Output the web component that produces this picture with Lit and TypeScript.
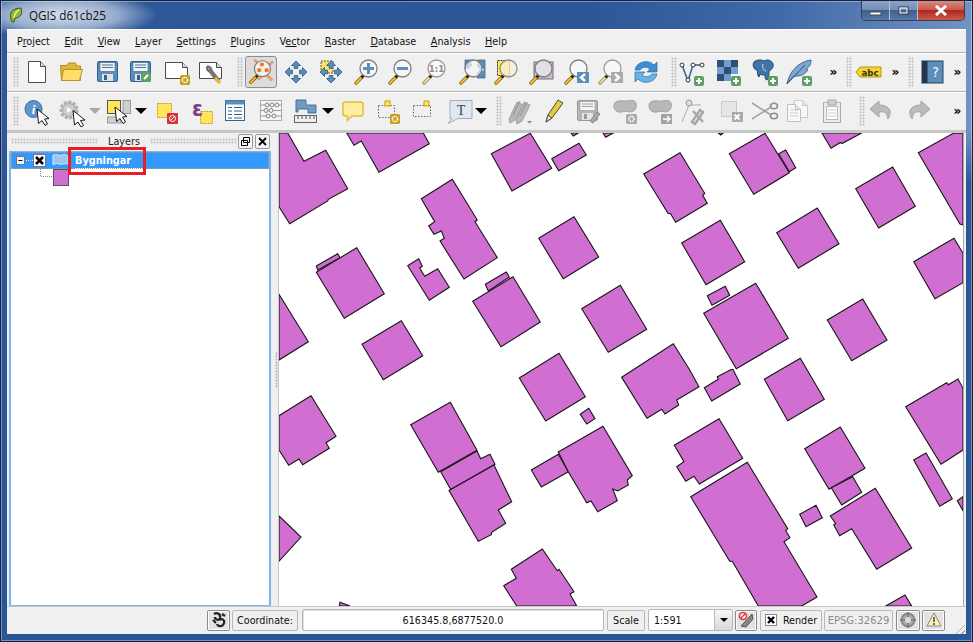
import { LitElement, html, css, svg } from 'lit';
import { customElement } from 'lit/decorators.js';

const BLUE = '#5b8dbd', DARK = '#34618c', YEL = '#ffe45c', YELD = '#c39f12', GRN = '#5f9f62';

// ---- small pieces the icons are built from
const plus = (x = 24, y = 24) => svg`<rect x=${x - 5} y=${y - 5} width="10" height="10" rx="2" fill=${GRN}/><path d="M${x - 3} ${y}h6M${x} ${y - 3}v6" stroke="#fff" stroke-width="2"/>`;
const gearBadge = (x = 24, y = 25) => svg`<rect x=${x - 5} y=${y - 5} width="10" height="10" rx="1.500" fill="#c9a018"/><circle cx=${x} cy=${y} r="2.600" fill="none" stroke="#fff" stroke-width="1.600" stroke-dasharray="1.400 .7"/>`;
const gearGray = (x = 24, y = 25) => svg`<rect x=${x - 5} y=${y - 5} width="11" height="10" rx="1.500" fill="#aaa"/><circle cx=${x + .5} cy=${y} r="2.600" fill="none" stroke="#fff" stroke-width="1.600" stroke-dasharray="1.400 .7"/>`;
const mag = (inner: unknown = '', glass = '#f6f6f6', ring = '#7d7d7d', handle = '#f0c030', hd = '#8a6a00') => svg`
  <path d="M5 27l6-6" stroke=${hd} stroke-width="3.600" stroke-linecap="round"/>
  <path d="M5 27l6-6" stroke=${handle} stroke-width="1.800" stroke-linecap="round"/>
  <path d="M10.500 21.500l2.500-2.500" stroke="#222" stroke-width="2.600"/>
  <circle cx="17.500" cy="12.500" r="8.500" fill=${glass} stroke=${ring} stroke-width="1.300"/>${inner}`;
const arrows4 = (c = BLUE, d = DARK) => svg`<g fill=${c} stroke=${d} stroke-width=".9" stroke-linejoin="round">
  <path d="M16 5l4.500 4.500h-2.700v3h-3.600v-3h-2.700z"/><path d="M16 27l4.500-4.500h-2.700v-3h-3.600v3h-2.700z"/>
  <path d="M5 16l4.500-4.500v2.700h3v3.600h-3v2.700z"/><path d="M27 16l-4.500-4.500v2.700h-3v3.600h3v2.700z"/></g>`;
const floppy = (c = BLUE, d = DARK, x = 6, y = 5) => svg`<g transform="translate(${x} ${y})">
  <rect x=".5" y=".5" width="20" height="20" rx="1.500" fill=${c} stroke=${d}/>
  <rect x="3" y="1.500" width="15" height="9" fill="#f4f4f4" stroke=${d} stroke-width=".6"/>
  <path d="M5 4h11M5 6.500h11" stroke=${d} stroke-width=".9"/>
  <rect x="5" y="13" width="11" height="7" fill="#e3e3e3"/><rect x="7" y="14" width="3" height="5" fill=${d}/></g>`;
const page = (x: number, y: number, w: number, h: number, c = '#4a4a4a') => svg`<path d="M${x} ${y}h${w - 5}l5 5v${h - 5}h${-w}z" fill="#fff" stroke=${c}/><path d="M${x + w - 5} ${y}v5h5" fill="#ddd" stroke=${c}/>`;
// white arrow pointer, tip at x,y
const cursor = (x = 0, y = 0) => svg`<path transform="translate(${x} ${y})" d="M0 0l12 9.500-4.500.5 3 5-2.500 1.500-3-5-3.500 3z" fill="#fff" stroke="#000" stroke-width=".9" stroke-linejoin="round"/>`;
const magGray = (inner: unknown = '') => mag(inner, '#f8f8f8', '#9a9a9a', '#e6d9a0', '#a08f55');
const blob = (x = 0) => svg`<path transform="translate(${x} 0)" d="M2 11c0-5 5-5.500 10-5 4 .6 6-1 9-.5 3 .8 4 4 3 7-1 4-5 5-8 4-4-1-5 1-9 .6-3-.6-5-3-5-6.100z" fill="#b8b8b8" stroke="#a0a0a0"/>`;

const icons: Record<string, unknown> = {
  newDoc: svg`${page(7.500, 5.500, 17, 21)}`,
  open: svg`<path d="M6.500 24.500l-1-15h6l2-2.500h7l1 3h4v14.500z" fill="#e0b838" stroke="#b08c1c"/><path d="M6.500 24.500l2-11h19l-3 11z" fill="#ffdd6a" stroke="#b8941e"/>`,
  save: floppy(),
  saveAs: svg`${floppy(BLUE, DARK, 4, 5)}<rect x="15" y="16" width="10" height="10" rx="2" fill=${GRN}/><path d="M18 23l4-4" stroke="#fff" stroke-width="2.200"/>`,
  composer: svg`${page(4.500, 6.500, 22, 16)}${gearBadge(24, 24)}`,
  manager: svg`${page(4.500, 6.500, 22, 16)}<path d="M12 10a4 4 0 0 0 2 6l8 10 3-2-8-10a4 4 0 0 0-5-4l3 3-1 2z" fill="#777" stroke="#444" stroke-width=".6"/><path d="M20 22l5 5" stroke="#e3b93a" stroke-width="3.400"/>`,
  touch: svg`<path d="M9 3l8 8M28 25l-9-9M29 5l-8 6M13 24l5-5" stroke="#e89a60" stroke-width="3"/>${mag('', '#f4efe8')}<circle cx="17" cy="8" r="2.200" fill="#e8772a"/><circle cx="14" cy="14" r="2.200" fill="#e8772a"/><circle cx="22" cy="14" r="2.200" fill="#e8772a"/>`,
  pan: arrows4(),
  panSel: svg`<rect x="6" y="5" width="12" height="12" fill=${YEL} stroke="#555" stroke-dasharray="2 1"/>${arrows4()}`,
  zoomIn: mag(svg`<path d="M12 12.500h11M17.500 7v11" stroke="#5a8fc2" stroke-width="3"/>`),
  zoomOut: mag(svg`<path d="M12 12.500h11" stroke="#5a8fc2" stroke-width="3"/>`),
  zoom11: magGray(svg`<text x="17.500" y="16" font-size="9.500" font-weight="700" text-anchor="middle" fill="#8a8a8a" font-family="DejaVu Sans">1:1</text>`),
  zoomFull: svg`<g fill=${BLUE} stroke=${DARK} stroke-width=".7"><path d="M9 4h8l-3 3 2 2-4 4-2-2-1 2z"/><path d="M29 4h-8l2 3-2 2 3 4 2-2 3 3z"/><path d="M29 22h-8l2-3-2-2 3-3 2 2 3-2z"/></g>${mag('', 'rgba(245,245,245,.7)')}`,
  zoomSel: svg`<rect x="6.500" y="4.500" width="12" height="15" fill=${YEL} stroke="#333" stroke-dasharray="2 1"/>${mag('', 'rgba(245,240,215,.75)', '#8d8d8d')}`,
  zoomLayer: svg`<rect x="8" y="6" width="19" height="17" fill="#cdbccb" stroke="#7d6c7b"/>${mag('', 'rgba(235,235,235,.75)')}`,
  zoomLast: svg`${mag()}<rect x="16" y="16" width="12" height="11" fill=${BLUE}/><path d="M24 18l-4 3.500 4 3.500" fill="none" stroke="#fff" stroke-width="2.400"/>`,
  zoomNext: svg`${magGray()}<rect x="16" y="16" width="12" height="11" fill="#aaa"/><path d="M20 18l4 3.500-4 3.500" fill="none" stroke="#fff" stroke-width="2.400"/>`,
  refresh: svg`<path d="M5 14a11 10 0 0 1 19-5l3-3v10h-10l3-3a6.500 6 0 0 0-10 1z" fill="#3f8fd0" stroke="#2a6fa8" stroke-width=".7"/><path d="M27 18a11 10 0 0 1-19 5l-3 3v-10h10l-3 3a6.500 6 0 0 0 10-1z" fill="#6cb0e4" stroke="#2a6fa8" stroke-width=".7"/>`,
  addVec: svg`<path d="M5 9l6 16 5-16 8 0" fill="none" stroke=${DARK} stroke-width="1.500"/><g fill="#fff" stroke="#333"><circle cx="5" cy="9" r="2"/><circle cx="11" cy="24" r="2"/><circle cx="16" cy="9" r="2"/><circle cx="25" cy="9" r="2"/></g>${plus(22, 25)}`,
  addRas: svg`<g fill="#2f4f74"><rect x="5" y="4" width="7" height="7"/><rect x="19" y="4" width="7" height="7"/><rect x="12" y="11" width="7" height="7"/><rect x="5" y="18" width="7" height="7"/></g><g fill="#6f9fce"><rect x="12" y="4" width="7" height="7"/><rect x="5" y="11" width="7" height="7"/><rect x="19" y="11" width="7" height="7"/><rect x="12" y="18" width="7" height="7"/></g>${plus(24, 25)}`,
  addPg: svg`<path d="M6 6c3-3 8-2 10-1 3-2 8-1 9 3 1 4-2 6-4 7 0 4 0 7-2 9-2 0-2-3-2-5-2 0-4 0-5-1l-1 3c-2-1-1-5-2-7-3 0-5-5-3-8z" fill="#3f74a8" stroke="#27496c"/><path d="M15 8c-1 3 0 6 3 7" fill="none" stroke="#cfe0ef"/>${plus(25, 25)}`,
  addSpl: svg`<path d="M4 28C6 17 14 6 28 4c0 6-3 8-5 9l2 1c-3 4-7 6-11 6-3 0-6 2-10 8z" fill="#7ea8d4" stroke="#3c6a98"/><path d="M4 28L22 9" stroke="#2b5078"/>${plus(24, 25)}`,
  abc: svg`<path d="M3 16l4-5h21v10H7z" fill="#f6d42a" stroke="#b8960a"/><text x="17" y="19.500" font-size="9.500" font-weight="700" text-anchor="middle" fill="#333" font-family="DejaVu Sans">abc</text>`,
  help: svg`<rect x="5" y="5" width="21" height="22" fill=${BLUE} stroke="#2a4057"/><rect x="5" y="5" width="5.500" height="22" fill="#24384d"/><text x="18.500" y="21" font-size="14" text-anchor="middle" fill="#fff" font-family="DejaVu Sans">?</text>`,
  identify: svg`<circle cx="13.500" cy="14" r="8.500" fill="#5f97cc" stroke="#3b6d9e"/><text x="13.500" y="19" font-size="13" font-weight="700" font-style="italic" text-anchor="middle" fill="#fff" font-family="Liberation Serif">i</text>${cursor(17, 14)}`,
  action: svg`<circle cx="15" cy="15" r="7.500" fill="#ddd" stroke="#b0b0b0" stroke-width="4" stroke-dasharray="3 1.300"/><circle cx="15" cy="15" r="6.500" fill="#ccc" stroke="#aaa"/><path d="M13 12l5 3-5 3z" fill="#fff"/>${cursor(19, 15.500)}`,
  select: svg`<rect x="5.500" y="5.500" width="13" height="13" fill=${YEL} stroke="#555"/><rect x="21" y="5.500" width="7.500" height="13" fill="#cfcfcf" stroke="#999"/><rect x="5.500" y="22" width="13.500" height="6" fill="#cfcfcf" stroke="#999"/>${cursor(13, 12)}`,
  deselect: svg`<rect x="9.500" y="8.500" width="14" height="14" fill=${YEL} stroke=${YELD} stroke-dasharray="2 1"/><rect x="19" y="18" width="11" height="11" rx="1" fill="#d8323a"/><circle cx="24.500" cy="23.500" r="3" fill="none" stroke="#fff"/><path d="M22.500 25.500l4-4" stroke="#fff"/>`,
  expr: svg`<rect x="16.500" y="16.500" width="12" height="12" fill=${YEL} stroke=${YELD} stroke-dasharray="2 1"/><text x="13.500" y="21" font-size="22" font-weight="700" text-anchor="middle" fill="#7a3f84" font-family="DejaVu Sans">ε</text>`,
  table: svg`<rect x="5.500" y="5.500" width="19" height="20" fill="#fff" stroke=${DARK}/><rect x="5.500" y="5.500" width="19" height="4" fill=${BLUE}/><path d="M8 12.500h4M14 12.500h8M8 16h4M14 16h8M8 19.500h4M14 19.500h8M8 23h4M14 23h8" stroke=${DARK} stroke-width="1.200"/>`,
  stats: svg`<rect x="5.500" y="5.500" width="21" height="20" fill="#f6f6f6" stroke="#aaa"/><path d="M6 10h20M6 15.500h20M6 21h20" stroke="#999"/><g fill="#eee" stroke="#888"><circle cx="12" cy="10" r="2"/><circle cx="17" cy="10" r="2"/><circle cx="22" cy="10" r="2"/><circle cx="11" cy="15.500" r="2"/><circle cx="16" cy="15.500" r="2"/><circle cx="13" cy="21" r="2"/><circle cx="19" cy="21" r="2"/></g>`,
  measure: svg`<path d="M6 5h10v5h10v8h-8v-4h-10v3h-2z" fill="#6f9cc4" stroke="#47729a"/><rect x="4.500" y="20.500" width="22" height="7" fill="#eee" stroke="#666"/><path d="M8 21v3M12 21v3M16 21v3M20 21v3M24 21v3" stroke="#555"/>`,
  tip: svg`<path d="M8.500 7h15q2.500 0 2.500 2.500v9q0 2.500-2.500 2.500H15l-4.500 4.500V21h-2Q6 21 6 18.500v-9Q6 7 8.500 7z" fill="#ffeda2" stroke="#e2bf33" stroke-width="1.500"/>`,
  annotNew: svg`<rect x="5.500" y="10.500" width="16" height="12" fill="none" stroke="#666" stroke-dasharray="1.500 1.500"/><rect x="12" y="6" width="5" height="5" fill=${YEL} stroke=${YELD}/>${gearBadge(22, 24)}`,
  annotMove: svg`<rect x="5.500" y="10.500" width="17" height="11" fill="none" stroke="#666" stroke-dasharray="1.500 1.500"/><path d="M16 6h5v5h-5z" fill=${YEL} stroke=${YELD}/>`,
  textNote: svg`<path d="M6 5.500h22v18H14l-10 5 4-5H6z" fill="#dfe9f2" stroke="#aab"/><text x="17" y="20" font-size="14" text-anchor="middle" fill="#444" font-family="Liberation Serif">T</text>`,
  editPencils: svg`<path d="M5 24l8-17 6 3-8 15-5 3zM12 25l8-18 6 3-8 16-5 3z" fill="#b8b8b8" stroke="#a0a0a0"/><path d="M9 20l7-14M16 21l7-14" stroke="#8e8e8e"/><path d="M23 26h5l-2.500 2.500z" fill="#888"/>`,
  pencil: svg`<path d="M9 27l2-7 10-15 5 3-11 15z" fill="#e8ca3c" stroke="#4a4a4a"/><path d="M9 27l2-7 4 3z" fill="#efe0b0" stroke="#4a4a4a"/>`,
  saveEdits: svg`${floppy('#b5b5b5', '#999', 5, 5)}<path d="M18 26l7-9 3 2-7 9z" fill="#aaa" stroke="#888"/>`,
  addFeat: svg`${blob(0)}${gearGray(19, 24)}`,
  moveFeat: svg`${blob(3)}<rect x="17" y="19" width="11" height="10" fill="#a4a4a4"/><path d="M19 24h7M23 21l3 3-3 3" stroke="#fff" fill="none" stroke-width="1.400"/>`,
  nodeTool: svg`<path d="M6 27L13 10M13 10h12" stroke="#aaa"/><circle cx="13" cy="8" r="3" fill="#ddd" stroke="#999"/><path d="M16 27l8-12 3 2-8 12zM17 16l10 11" stroke="#a8a8a8" stroke-width="2.500" fill="none"/>`,
  delFeat: svg`<rect x="6.500" y="6.500" width="15" height="15" fill="#e6e6e6" stroke="#bbb" stroke-dasharray="2 1"/><rect x="17" y="17" width="11" height="10" fill="#aaa"/><path d="M19.500 19.500l5 5M24.500 19.500l-5 5" stroke="#fff" stroke-width="1.800"/>`,
  cut: svg`<path d="M3 8l19 12M3 24l19-12" stroke="#a4a4a4" stroke-width="1.600"/><g fill="none" stroke="#909090" stroke-width="1.600"><ellipse cx="25" cy="11" rx="3.500" ry="2.800"/><ellipse cx="25" cy="21" rx="3.500" ry="2.800"/></g>`,
  copy: svg`<g opacity=".55">${page(12.500, 5.500, 13, 17, '#aaa')}${page(5.500, 9.500, 13, 17, '#999')}</g><path d="M8 15h8M8 18h8M8 21h8" stroke="#ccc"/>`,
  paste: svg`<rect x="6.500" y="7.500" width="17" height="20" fill="#eee" stroke="#aaa"/><rect x="11" y="5" width="8" height="5" fill="#ccc" stroke="#aaa"/><rect x="9.500" y="11.500" width="11" height="13" fill="#fff" stroke="#bbb"/><path d="M11 15h8M11 18h8M11 21h8" stroke="#ccc"/>`,
  undo: svg`<path d="M13 6L4 14l9 8v-5c6-1 8 1 9 7 5-8 1-14-9-14z" fill="#bbb" stroke="#a4a4a4"/>`,
  redo: svg`<path d="M19 6l9 8-9 8v-5c-6-1-8 1-9 7-5-8-1-14 9-14z" fill="#bbb" stroke="#a4a4a4"/>`,
};

type Item = { c: number; w?: number; k: string; on?: boolean };
const row1: Item[] = [
  { c: 16, w: 6, k: 'grip' },
  { c: 37, k: 'newDoc' }, { c: 71, k: 'open' }, { c: 107, k: 'save' }, { c: 142, k: 'saveAs' }, { c: 177, k: 'composer' }, { c: 211, k: 'manager' },
  { c: 240, w: 6, k: 'grip' },
  { c: 261, k: 'touch', on: true }, { c: 296, k: 'pan' }, { c: 331, k: 'panSel' }, { c: 367, k: 'zoomIn' }, { c: 401, k: 'zoomOut' }, { c: 435, k: 'zoom11' },
  { c: 472, k: 'zoomFull' }, { c: 507, k: 'zoomSel' }, { c: 542, k: 'zoomLayer' }, { c: 577, k: 'zoomLast' }, { c: 611, k: 'zoomNext' }, { c: 646, k: 'refresh' },
  { c: 674, w: 6, k: 'grip' },
  { c: 693, k: 'addVec' }, { c: 728, k: 'addRas' }, { c: 764, k: 'addPg' }, { c: 799, k: 'addSpl' }, { c: 833, w: 14, k: 'more' },
  { c: 849, w: 6, k: 'grip' }, { c: 869, k: 'abc' }, { c: 895, w: 14, k: 'more' },
  { c: 911, w: 6, k: 'grip' }, { c: 933, k: 'help' }, { c: 957, w: 14, k: 'more' },
];
const row2: Item[] = [
  { c: 16, w: 6, k: 'grip' },
  { c: 36, k: 'identify' }, { c: 70, k: 'action' }, { c: 95, w: 12, k: 'arrowOff' }, { c: 118, k: 'select' }, { c: 141, w: 12, k: 'arrow' },
  { c: 164, k: 'deselect' }, { c: 200, k: 'expr' }, { c: 236, k: 'table' }, { c: 271, k: 'stats' }, { c: 306, k: 'measure' }, { c: 328, w: 12, k: 'arrow' },
  { c: 353, k: 'tip' }, { c: 389, k: 'annotNew' }, { c: 424, k: 'annotMove' }, { c: 460, k: 'textNote' }, { c: 481, w: 12, k: 'arrow' },
  { c: 499, w: 6, k: 'grip' }, { c: 520, k: 'editPencils' }, { c: 553, k: 'pencil' }, { c: 588, k: 'saveEdits' }, { c: 628, k: 'addFeat' }, { c: 660, k: 'moveFeat' },
  { c: 692, k: 'nodeTool' }, { c: 731, k: 'delFeat' }, { c: 765, k: 'cut' }, { c: 798, k: 'copy' }, { c: 833, k: 'paste' },
  { c: 862, w: 6, k: 'grip' }, { c: 882, k: 'undo' }, { c: 918, k: 'redo' }, { c: 957, w: 14, k: 'more' },
];

const menus: [string, string][] = [['Pr', 'oject'], ['E', 'dit'], ['V', 'iew'], ['L', 'ayer'], ['S', 'ettings'], ['P', 'lugins'], ['Vec', 'tor'], ['R', 'aster'], ['D', 'atabase'], ['A', 'nalysis'], ['H', 'elp']];

// building footprints, page coordinates
const buildings = [
  '279,133 287.700,133 304,161.300 325.700,150.300 347.700,188.700 328.300,199.300 327.700,201 289.700,223.700 279,206.700',
  '346.700,133 354,145.300 361.300,141 379,172.300 429.300,143.700 423.300,133',
  '491.300,153.700 530.300,133.300 551.700,168.300 512,191',
  '551.700,158.700 579,143.300 586.300,155 558.700,170.700',
  '571,133 578.300,133 573.300,136', '603,133 613.300,133 605.700,137.300',
  '421.300,198.700 452.300,179.300 477.300,220 475,221.700 497.300,257.700 464,279 440,241 444.300,238.300 441.300,231 434,234.300 428.700,226 434.700,221.700',
  '538.700,238.300 574,216.700 598.700,257 563.300,278.700',
  '316.300,266 337.700,253.700 340,257.700 317.700,270',
  '316.300,272.300 356.700,247.700 384.300,293.700 344.300,318.300',
  '407.700,265.700 418.700,258.700 422.300,266 419.700,268 424.700,276.300 437.700,268.700 449.300,287.300 429.300,300.300',
  '485.300,284.300 506.300,272 509.300,277 488.300,291',
  '472.700,301.300 513,276.700 540.300,322 501,346.700',
  '581.700,308.700 620.300,285.300 646.700,329.300 608.300,352.300',
  '279,294.300 308.300,341.700 279,360',
  '362,344.300 401.300,320.700 422.700,355.700 383.300,379.700',
  '519.300,378 559,353.300 585.300,396.700 545.700,421',
  '643.700,174 680,152.700 704.700,193.300 702.700,195.300 707.300,203.300 675.700,222.300 670.700,214 668,213.300',
  '718.300,133 723.300,133 720.700,135',
  '778.700,153.700 785.700,150 795.700,167.700 789.300,171.700',
  '729.300,153.700 765,133.300 789.300,172.700 753.700,194.300',
  '822,133 861.700,133 842.300,143.300 840,142.700 831,148.300',
  '918.300,152.700 953.300,133.300 963,133 963,225 960,224',
  '855.700,188.700 892.700,167 915.300,206.300 878.700,228',
  '681.700,243 720.300,220.300 744.700,261.700 706,284.700',
  '776.700,232.700 817.300,208 839,243.700 798.300,268.300',
  '913.700,261.700 954,238.300 963,253.300 963,282.700 935,298.700',
  '707.300,295.700 725.300,286.300 729.700,295.300 712,305.300',
  '703.700,313.300 755.700,283.300 788.300,338.300 736.300,368.700',
  '827.300,320 862.700,299 887,340 851.700,360.700',
  '621.700,377.300 673.300,343.700 689.300,369.300 699,386.700 676.700,400 678.700,405 665,414 661.700,409.300 647,418.300',
  '704.300,387.700 718.300,379.300 717.300,376.700 731,369.500 733,369.500 740.300,384 711.700,401',
  '764.300,379.300 800.300,358.300 824.300,399.300 787.700,420.700',
  '905.700,406.700 946.700,382.700 948.300,384.700 958,379 963,388.300 963,450 941,464.300',
  '674.300,445.300 719,418.700 742.700,458.300 699.300,484 694,476.300 685.700,481.300 676.700,466.700 684,461.700',
  '690.700,496.700 747.300,462.300 787.700,528.700 785.700,530.700 790,537.700 784,541.700 817,597 801.700,606 758.300,606 732.300,561.300 729.700,561.300',
  '799.700,514.300 816,505.300 822.300,517.700 806,526.700',
  '804.700,448.700 840.300,427 865,468.300 829,489.300',
  '831.300,487.700 852.700,476.700 861.700,492.300 841.700,505',
  '830.300,516 875.300,488.300 911.700,548 876.700,569.300 851.700,528.700 839.700,535.700 833.700,525 835.700,523.300',
  '913.700,460 926,453 952.300,498.700 939.700,506.300',
  '957.300,500.700 963,496.700 963,510.700',
  '885.700,606 905,595 911.700,606',
  '279,415.700 311,395.700 336,436.300 326,442.700 329.300,448.300 302.700,464.700 299,459 288.700,465.300 279,450',
  '410.700,424.700 450.300,402.300 477,450.300 438.300,472.300',
  '440.700,471.700 477,451 480.700,458.700 490,454.300 495,464.300 450.700,489.500',
  '449,490.500 494,465 511.700,501.700 498.300,510 505.700,523.300 491.700,532.300 491.300,534.700 478.300,541.300',
  '279,516 301,537 279,561.300',
  '340,602.300 350,606 339.300,606',
  '580.300,414.300 588.700,408.300 595,418.700 586.700,424',
  '531.300,470 558.300,454.300 568.300,471.700 541.300,487',
  '558.300,452 603,426.300 632.300,475.700 627.300,480 628.300,485 617.700,491 612.700,489 617.300,500.700 597.700,511.700 591,501 586.700,502.700 568.300,471.700',
  '511.300,569.300 542.300,549 557.300,570.700 559,569.300 574,591.700 570,594 576.700,606 516.700,606 503.700,585.700 516.300,578.300',
];

@customElement('app-root')
export class AppRoot extends LitElement {
  static styles = css`
    :host {
      display: flex; flex-direction: column; width: 973px; height: 642px; box-sizing: border-box;
      font-family: "DejaVu Sans", sans-serif; font-stretch: condensed; font-size: 10.700px; color: #111;
      background:
        radial-gradient(ellipse 95px 24px at 62px 15px, rgba(232,238,246,.9), rgba(232,238,246,.55) 60%, transparent),
        linear-gradient(180deg, rgba(42,85,150,0) 130px, #2a5596 185px),
        linear-gradient(90deg, #2e5899 0, #2d5698 60%, #3f69a8 80%, #7493c2 100%);
      box-shadow: inset 0 0 0 1px #16253f, inset 0 0 0 2px rgba(255,255,255,.35);
    }
    .title { flex: none; height: 29px; display: flex; align-items: flex-start; }
    .logo { margin: 7px 0 0 9px; }
    .title span { margin: 7px 0 0 6px; font: 11.700px "Open Sans", sans-serif; font-stretch: normal; color: #101010; }
    .ctl { margin: 1px 8px 0 auto; display: flex; height: 19px; border: 1px solid #2c3f5e; border-top: none; border-radius: 0 0 5px 5px; overflow: hidden; }
    .ctl div { display: flex; align-items: center; justify-content: center; width: 27px; background: linear-gradient(#8aa2c4, #7590b6 45%, #3f5f8e 50%, #5877a2); border-right: 1px solid #b4c3d8; }
    .ctl div:last-child { width: 46px; border: none; background: linear-gradient(#d98b80, #c9594c 45%, #ad2a1d 50%, #cc5a45); }
    .client { flex: none; margin: 0 7px; width: 959px; height: 605px; display: flex; flex-direction: column; background: #f0f0f0; box-shadow: inset 0 1px 0 #fff; }
    .menu { flex: none; height: 23px; display: flex; align-items: center; gap: 14.600px; padding: 2px 0 0 10px; box-sizing: border-box; }
    .menu u { text-underline-offset: 1px; }
    .tb { flex: none; height: 39px; box-sizing: border-box; display: flex; align-items: center; border-top: 1px solid #b4b4b4; box-shadow: inset 0 1px 0 #fff; }
    .slot { flex: none; height: 32px; width: 32px; display: flex; align-items: center; justify-content: center; box-sizing: border-box; }
    .slot.on { background: #dcdcdc; border: 1px solid #8d8d8d; border-radius: 3px; }
    .grip { width: 6px; height: 30px; background: radial-gradient(circle at 1.500px 1.500px, #d0d0d0 1px, transparent 1.400px) 0 0 / 3px 3px; }
    .arrow { width: 0; height: 0; border: 5px solid transparent; border-top: 6px solid #000; border-bottom: none; border-left-width: 6px; border-right-width: 6px; }
    .arrow.off { border-top-color: #aaa; }
    .more { font: 700 12px "DejaVu Sans", sans-serif; color: #000; letter-spacing: -1px; }
    .sep { flex: none; height: 3px; background: #c6c6c6; }
    .main { flex: none; height: 473px; display: flex; }
    .panel { position: relative; flex: none; width: 266px; display: flex; flex-direction: column; }
    .phead { flex: none; height: 18px; display: flex; align-items: center; gap: 5px; padding: 0 3px 2px 4px; box-sizing: border-box; }
    .dash { flex: 1; height: 6px; background: radial-gradient(circle at 1.500px 1.500px, #d2d2d2 1px, transparent 1.400px) 0 0 / 3px 3px; }
    .phead .lbl { flex: none; width: 42px; text-align: center; color: #222; }
    .pbtn { flex: none; width: 13px; height: 13px; border: 1px solid #9a9a9a; border-radius: 2px; background: #f4f4f4; display: flex; align-items: center; justify-content: center; margin-left: -4px; }
    .pbtn.close { margin-left: -3px; }
    .tree { flex: 1; margin: 0 2px; background: #fff; border: 2px solid #79b6ee; border-bottom-width: 1px; border-top-width: 1px; }
    .selrow { display: flex; align-items: center; height: 17px; background: #3399ff; outline: 1px dotted #b9a06a; outline-offset: -1px; color: #fff; }
    .selrow svg { flex: none; }
    .selrow b { display: block; box-sizing: border-box; width: 68px; height: 15px; line-height: 14px; margin: 1px 0 0 4px; padding-left: 1px; font: 700 10.800px/14px "DejaVu Sans", sans-serif; font-stretch: condensed; border-bottom: 1px solid #fff; color: #fff; overflow: hidden; }
    .symrow { display: flex; height: 17px; }
    .conn { margin: 0 -42px 0 29px; }
    .swatch { width: 14px; height: 15px; margin-left: 42px; background: #d06fd1; border: 1px solid #555; }
    .redbox { position: absolute; left: 61px; top: 14px; width: 72px; height: 22px; border: 3px solid #ed1c24; }
    .split { flex: none; width: 6px; display: flex; align-items: center; justify-content: center; }
    .split i { width: 3px; height: 36px; background: radial-gradient(circle at 1.500px 1.500px, #c8c8c8 1px, transparent 1.400px) 0 0 / 3px 3px; }
    .map { flex: none; width: 684px; height: 473px; display: block; background: #fff; box-shadow: -1px 0 0 #c6c6c6; }
    .right { flex: 1; box-shadow: inset 1px 0 0 #a8a8a8; }
    .status { flex: none; height: 28px; display: flex; align-items: center; gap: 2px; padding-right: 8px; justify-content: flex-end; box-shadow: inset 0 1px 0 #c6c6c6; }
    .box { flex: none; height: 21px; box-sizing: border-box; border: 1px solid #b8b8b8; border-radius: 2px; display: flex; align-items: center; justify-content: center; background: #f0f0f0; }
    .btn { width: 23px; border-color: #8a8a8a; background: #e2e2e2; box-shadow: inset 0 0 0 1px #fff; }
    .btn.w22 { width: 22px; }
    .btn.w24 { width: 24px; margin-left: 1px; }
    .coord { width: 66px; }
    .scale { width: 38px; }
    .input { width: 302px; margin: 0 1px 0 2px; height: 22px; background: #fff; box-shadow: inset 1px 1px 0 #ddd; }
    .combo { width: 85px; height: 22px; margin-left: 1px; background: #fff; justify-content: flex-start; padding-left: 5px; position: relative; }
    .combo em { position: absolute; right: 0; top: 0; bottom: 0; width: 17px; background: linear-gradient(#f6f6f6, #d8d8d8); border-left: 1px solid #bbb; display: flex; align-items: center; justify-content: center; }
    .combo em::after { content: ""; border: 4px solid transparent; border-top: 4px solid #000; border-bottom: none; }
    .render { width: 62px; gap: 6px; margin-left: 1px; }
    .epsg { width: 69px; color: #8a8a8a; font-stretch: normal; font-size: 10px; }
    .sgrip { flex: none; width: 12px; height: 12px; align-self: flex-end; margin-left: 6px; margin-right: -7px; background: repeating-linear-gradient(135deg, transparent 0 2px, #a8a8a8 2px 3px, #fff 3px 4px); clip-path: polygon(100% 0, 100% 100%, 0 100%); }
    .bottom { flex: 1; }
  `;

  tbRow(items: Item[]) {
    let edge = 7;
    return items.map((it) => {
      const w = it.w ?? 32;
      const ml = it.c - w / 2 - edge;
      edge = it.c + w / 2;
      const st = `width:${w}px;margin-left:${ml}px`;
      if (it.k === 'grip') return html`<div class="slot grip" style=${st}></div>`;
      if (it.k === 'more') return html`<div class="slot more" style=${st}>»</div>`;
      if (it.k === 'arrow') return html`<div class="slot" style=${st}><div class="arrow"></div></div>`;
      if (it.k === 'arrowOff') return html`<div class="slot" style=${st}><div class="arrow off"></div></div>`;
      return html`<div class="slot ${it.on ? 'on' : ''}" style=${st}>
        <svg width="32" height="32" viewBox="0 0 32 32">${icons[it.k]}</svg>
      </div>`;
    });
  }

  render() {
    return html`
      <div class="title">
        <svg class="logo" width="14" height="16" viewBox="0 0 14 16">
          <path d="M3 15C1 11 1 6 3 4c2-2 6-3 9-3 1 3 1 6-1 8-2 2-4 2-5 2l-1 4z" fill="#8cb83c" stroke="#33591a"/>
          <path d="M5 11c0-3 2-6 5-8" fill="none" stroke="#f4ec6a" stroke-width="1.600"/>
        </svg>
        <span>QGIS d61cb25</span>
        <div class="ctl">
          <div><svg width="12" height="10"><rect x="0" y="6" width="11" height="3" fill="#fff" stroke="#445"/></svg></div>
          <div><svg width="12" height="10"><rect x="1" y="1" width="9" height="7" fill="none" stroke="#334" stroke-width="1"/><rect x="2" y="2" width="7" height="5" fill="none" stroke="#fff" stroke-width="1"/></svg></div>
          <div><svg width="14" height="11"><path d="M2 1l10 9M12 1L2 10" stroke="#fff" stroke-width="3"/></svg></div>
        </div>
      </div>
      <div class="client">
        <div class="menu">${menus.map(([a, b]) => html`<span>${a.length > 1 ? html`${a[0]}<u>${a.slice(1)}</u>` : html`<u>${a}</u>`}${b}</span>`)}</div>
        <div class="tb">${this.tbRow(row1)}</div>
        <div class="tb">${this.tbRow(row2)}</div>
        <div class="sep"></div>
        <div class="main">
          <div class="panel">
            <div class="phead">
              <div class="dash"></div><div class="lbl">Layers</div><div class="dash"></div>
              <div class="pbtn"><svg width="11" height="11"><path d="M3.500 1.500h6v5h-6zM1.500 4.500h6v5h-6z" fill="#f4f4f4" stroke="#000"/></svg></div>
              <div class="pbtn close"><svg width="11" height="11"><path d="M2 2l7 7M9 2l-7 7" stroke="#000" stroke-width="1.800"/></svg></div>
            </div>
            <div class="tree">
              <div class="selrow">
                <svg width="59" height="17" viewBox="0 0 59 17">
                  <rect x="5.500" y="4.500" width="8" height="8" fill="#f4f4f4" stroke="#777"/><path d="M7.500 8.500h4" stroke="#000"/>
                  <path d="M15 8.500h7" stroke="#cfe4fa" stroke-dasharray="1 1"/>
                  <rect x="22.500" y="2.500" width="12" height="12" fill="#fff" stroke="#777"/><path d="M25 5l7 7M32 5l-7 7" stroke="#000" stroke-width="2.600"/>
                  <path d="M42 3c4-1 6 1 9 0 3-1 5 0 6 1v8c-3-1-6 1-9 0-2-1-5 0-6 1z" fill="#9cc6ee" stroke="#d5e6f7"/>
                </svg>
                <b>Bygningar</b>
              </div>
              <div class="symrow">
                <svg class="conn" width="13" height="16" viewBox="0 0 13 16"><path d="M.5 0v7.500H12" fill="none" stroke="#888" stroke-dasharray="1 1"/></svg>
                <div class="swatch"></div>
              </div>
            </div>
            <div class="redbox"></div>
          </div>
          <div class="split"><i></i></div>
          <svg class="map" viewBox="279 133 684 473">
            ${buildings.map((p) => svg`<polygon points=${p} fill="#d06fd1" stroke="#161616" stroke-width="1.100" stroke-linejoin="miter"/>`)}
          </svg>
          <div class="right"></div>
        </div>
        <div class="status">
          <div class="box btn"><svg width="18" height="18" viewBox="0 0 18 18"><path d="M4 3c3-2 7 0 6 4-1 3-5 2-5-1M9 9c3-2 6 0 5 3-1 4-6 4-7 1M3 9l3 3M12 3l3 2" fill="none" stroke="#222" stroke-width="2.200"/></svg></div>
          <div class="box coord">Coordinate:</div>
          <div class="box input">616345.8,6877520.0</div>
          <div class="box scale">Scale</div>
          <div class="box combo">1:591<em></em></div>
          <div class="box btn w22"><svg width="18" height="18" viewBox="0 0 18 18"><path d="M4 15L15 3l1 5-7 8z" fill="#888" stroke="#555"/><circle cx="6" cy="5" r="3.500" fill="#fff" stroke="#d8323a" stroke-width="1.500"/><path d="M3.500 7.500l5-5" stroke="#d8323a" stroke-width="1.500"/></svg></div>
          <div class="box render"><svg width="12" height="12"><rect x=".5" y=".5" width="11" height="11" fill="#fff" stroke="#888"/><path d="M3 3l6 6M9 3l-6 6" stroke="#000" stroke-width="2.400"/></svg><span>Render</span></div>
          <div class="box epsg">EPSG:32629</div>
          <div class="box btn w24"><svg width="18" height="18" viewBox="0 0 18 18"><circle cx="9" cy="9" r="6.500" fill="#aaa" stroke="#888" stroke-width="2"/><path d="M9 1v16M1 9h16" stroke="#777" stroke-width="1.500"/><circle cx="9" cy="9" r="3" fill="#ddd"/></svg></div>
          <div class="box btn"><svg width="18" height="18" viewBox="0 0 18 18"><path d="M9 2l7 13H2z" fill="#fbf5b8" stroke="#888"/><path d="M9 6v5M9 12v2" stroke="#444" stroke-width="1.500"/></svg></div>
          <div class="sgrip"></div>
        </div>
      </div>
      <div class="bottom"></div>
    `;
  }
}
